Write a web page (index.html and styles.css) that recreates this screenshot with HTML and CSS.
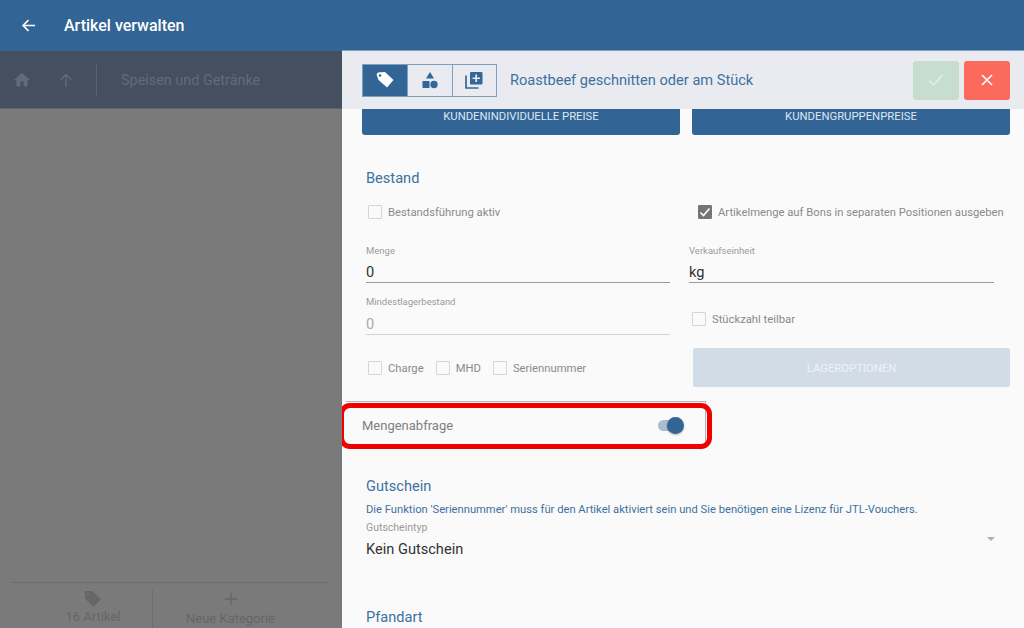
FILE: index.html
```html
<!DOCTYPE html>
<html>
<head>
    <title>Artikel verwalten</title>
    <link rel="stylesheet" href="styles.css">
</head>
<body>
    <header class="topbar">
        <svg class="back-icon" width="15" height="15" viewBox="0 0 16 16"><path d="M15 8H2.5M8 2.2 2.2 8 8 13.8" fill="none" stroke="#fff" stroke-width="1.7"/></svg>
        <span class="topbar-title">Artikel verwalten</span>
    </header>

    <div class="main">
        <aside class="left-pane">
            <div class="crumbs">
                <svg class="crumb-home" width="16" height="15" viewBox="0 0 16 15"><path d="M6.4 14.5V9.6h3.2v4.9h4V8h2.4L8 .8 0 8h2.4v6.5z" fill="#636b76"/></svg>
                <svg class="crumb-up" width="14" height="14" viewBox="0 0 14 14"><path d="M7 14V1.5M1.5 7 7 1.5 12.5 7" fill="none" stroke="#636b76" stroke-width="1.4"/></svg>
                <span class="crumb-sep"></span>
                <span class="crumb-text">Speisen und Getränke</span>
            </div>
            <div class="left-empty"></div>
            <div class="left-footer">
                <div class="footer-btn footer-articles">
                    <svg width="18" height="18" viewBox="0 0 18 18"><path d="M1 2a1 1 0 0 1 1-1h6.500l8.500 8.500-7.500 7.500L1 8.500z" fill="#666"/><circle cx="4" cy="4" r="1" fill="#7a7a7a"/></svg>
                    <span>16 Artikel</span>
                </div>
                <div class="footer-btn footer-new">
                    <svg width="14" height="14" viewBox="0 0 14 14"><path d="M7 1v12M1 7h12" fill="none" stroke="#666" stroke-width="1.3"/></svg>
                    <span>Neue Kategorie</span>
                </div>
            </div>
        </aside>

        <section class="panel">
            <div class="toolbar">
                <div class="tabs">
                    <div class="tab tab-active">
                        <svg width="20" height="18" viewBox="0 0 20 18"><path d="M1.500 3.500 3 1.500l7-.5 8.500 8-6.500 7.500L3.500 9z" fill="#fff"/><circle cx="5" cy="4.500" r="1.300" fill="#336699"/></svg>
                    </div>
                    <div class="tab">
                        <svg width="18" height="18" viewBox="0 0 18 18"><path d="M9 1l4 6.500H5z" fill="#336699"/><rect x="1.500" y="10" width="7" height="7" fill="#336699"/><circle cx="13" cy="13.500" r="3.700" fill="#336699"/></svg>
                    </div>
                    <div class="tab">
                        <svg width="18" height="18" viewBox="0 0 18 18"><path d="M1 4.500V17h12.500" fill="none" stroke="#336699" stroke-width="1.700"/><path d="M6 1h10.500a1 1 0 0 1 1 1v10.500a1 1 0 0 1-1 1H6a1 1 0 0 1-1-1V2a1 1 0 0 1 1-1z" fill="#336699"/><path d="M11.200 3.500v7.500M7.500 7.250H15" stroke="#e9ebf1" stroke-width="1.700"/></svg>
                    </div>
                </div>
                <span class="toolbar-title">Roastbeef geschnitten oder am Stück</span>
                <button class="action action-ok">
                    <svg width="16" height="14" viewBox="0 0 16 14"><path d="M1.500 7.500 5.500 12 14.500 2" fill="none" stroke="#e6f0ea" stroke-width="1.300"/></svg>
                </button>
                <button class="action action-cancel">
                    <svg width="14" height="14" viewBox="0 0 14 14"><path d="M2 2l10 10M12 2 2 12" fill="none" stroke="#fff" stroke-width="1.700"/></svg>
                </button>
            </div>

            <div class="content">
                <div class="price-row">
                    <div class="price-btn">KUNDENINDIVIDUELLE PREISE</div>
                    <div class="price-btn">KUNDENGRUPPENPREISE</div>
                </div>

                <h2 class="section-title title-stock">Bestand</h2>

                <div class="check-row row-stock">
                    <label class="check check-stock"><span class="box"></span>Bestandsführung aktiv</label>
                    <label class="check check-separate">
                        <span class="box box-on">
                            <svg width="12" height="12" viewBox="0 0 12 12"><path d="M1.500 6.500 4.500 9.500 10.500 2.500" fill="none" stroke="#fff" stroke-width="1.600"/></svg>
                        </span>Artikelmenge auf Bons in separaten Positionen ausgeben
                    </label>
                </div>

                <div class="field-row row-qty">
                    <div class="field">
                        <span class="field-label">Menge</span>
                        <span class="field-value">0</span>
                    </div>
                    <div class="field field-right">
                        <span class="field-label">Verkaufseinheit</span>
                        <span class="field-value">kg</span>
                    </div>
                </div>

                <div class="field-row row-min">
                    <div class="field field-disabled">
                        <span class="field-label">Mindestlagerbestand</span>
                        <span class="field-value">0</span>
                    </div>
                    <label class="check check-divisible"><span class="box"></span>Stückzahl teilbar</label>
                </div>

                <div class="options-row">
                    <div class="options-checks">
                        <label class="check"><span class="box"></span>Charge</label>
                        <label class="check"><span class="box"></span>MHD</label>
                        <label class="check"><span class="box"></span>Seriennummer</label>
                    </div>
                    <div class="stock-btn">LAGEROPTIONEN</div>
                </div>

                <div class="toggle-card">
                    <span class="toggle-label">Mengenabfrage</span>
                    <span class="switch"><span class="switch-knob"></span></span>
                    <span class="highlight"></span>
                </div>

                <h2 class="section-title title-voucher">Gutschein</h2>
                <p class="voucher-note">Die Funktion 'Seriennummer' muss für den Artikel aktiviert sein und Sie benötigen eine Lizenz für JTL-Vouchers.</p>
                <div class="select-field">
                    <span class="field-label">Gutscheintyp</span>
                    <span class="field-value">Kein Gutschein</span>
                    <span class="select-arrow"></span>
                </div>

                <h2 class="section-title title-deposit">Pfandart</h2>
            </div>
        </section>
    </div>
</body>
</html>
```

FILE: styles.css
```css
* {
    box-sizing: border-box;
}

html,
body {
    height: 100%;
    margin: 0;
    overflow: hidden;
}

body {
    display: flex;
    flex-direction: column;
    font-family: Roboto, "Liberation Sans", sans-serif;
    background: #7a7a7a;
}

.topbar {
    display: flex;
    align-items: center;
    flex: 0 0 51px;
    padding-left: 21px;
    background: #326496;
}

.topbar-title {
    margin-left: 28px;
    color: #fff;
    font-size: 16px;
    font-weight: 500;
}

.main {
    display: flex;
    flex: 1;
    min-height: 0;
}

/* left side, dimmed behind the panel */
.left-pane {
    display: flex;
    flex-direction: column;
    flex: 0 0 342px;
}

.crumbs {
    display: flex;
    align-items: center;
    flex: 0 0 58px;
    padding-left: 14px;
    background: #444f60;
    border-bottom: 1px solid #5f6670;
}

.crumb-up {
    margin-left: 29px;
}

.crumb-sep {
    width: 1px;
    height: 32px;
    margin-left: 23px;
    background: #5a6370;
}

.crumb-text {
    margin: 1px 0 0 24px;
    color: #636b76;
    font-size: 14.400px;
}

.left-empty {
    flex: 1;
}

.left-footer {
    display: flex;
    flex: 0 0 46px;
    margin: 0 14px 0 12px;
    padding-top: 7px;
    border-top: 1px solid #6d6d6d;
}

.footer-btn {
    display: flex;
    flex-direction: column;
    align-items: center;
    gap: 1px;
    color: #666;
    font-size: 13px;
}

.footer-articles {
    flex: 0 0 141px;
    padding-left: 22px;
    border-right: 1px solid #6d6d6d;
}

.footer-new {
    flex: 1;
    gap: 5px;
    padding: 2px 20px 0 0;
}

/* right panel */
.panel {
    display: flex;
    flex-direction: column;
    flex: 1;
    min-width: 0;
    background: #fafafa;
    border-top: 1px solid #7f9fc0;
    margin-top: -1px;
}

.toolbar {
    display: flex;
    align-items: center;
    flex: 0 0 58px;
    padding: 0 14px 0 20px;
    background: #e9ebf1;
}

.tabs {
    display: flex;
    border: 1px solid #7f9fc0;
}

.tab {
    display: flex;
    align-items: center;
    justify-content: center;
    width: 44.300px;
    height: 31px;
    border-left: 1px solid #7f9fc0;
}

.tab:first-child {
    border-left: 0;
}

.tab-active {
    background: #326496;
}

.toolbar-title {
    flex: 1;
    margin-left: 13px;
    color: #3f719f;
    font-size: 14.600px;
}

.action {
    display: flex;
    align-items: center;
    justify-content: center;
    width: 46px;
    height: 39px;
    margin-left: 5px;
    padding: 0;
    border: 0;
    border-radius: 3px;
}

.action-ok {
    background: #c6ddcf;
}

.action-cancel {
    margin-left: 5px;
    background: #fc695d;
}

.content {
    flex: 1;
    min-height: 0;
    overflow: hidden;
    padding: 0 14px 0 20px;
}

.price-row {
    display: flex;
    gap: 12px;
}

.price-btn {
    flex: 1;
    height: 26px;
    padding-top: 1px;
    border-radius: 0 0 3px 3px;
    background: #326496;
    color: #dfe7ef;
    font-size: 11.300px;
    line-height: 14px;
    text-align: center;
}

.section-title {
    margin: 0 0 0 4px;
    color: #3f719f;
    font-size: 14.600px;
    font-weight: 400;
    line-height: 18px;
}

.title-stock {
    margin-top: 34px;
}

.check {
    display: flex;
    align-items: center;
    color: #8a8a8a;
    font-size: 11.250px;
}

.box {
    display: flex;
    align-items: center;
    justify-content: center;
    width: 14px;
    height: 14px;
    margin-right: 6px;
    border: 1px solid #d5d5d5;
    border-radius: 1px;
}

.box-on {
    background: #757575;
    border-color: #757575;
}

.row-stock {
    display: flex;
    margin-top: 18px;
    padding-left: 6px;
}

.check-stock {
    flex: 0 0 330px;
}

.field-row {
    display: flex;
    margin-left: 4px;
}

.row-qty {
    margin-top: 26px;
}

.row-min {
    margin-top: 13px;
}

.field {
    display: flex;
    flex-direction: column;
    width: 304px;
    height: 38px;
    border-bottom: 1px solid #9a9a9a;
}

.field-right {
    width: 305px;
    margin-left: 19px;
}

.field-label {
    color: #9a9a9a;
    font-size: 9.500px;
    line-height: 12px;
}

.field-value {
    margin-top: 7px;
    color: #333;
    font-size: 14.600px;
    line-height: 17px;
}

.field-disabled {
    height: 39px;
    border-bottom-color: #d5d5d5;
}

.field-disabled .field-value {
    margin-top: 8px;
    color: #aaa;
}

.check-divisible {
    margin-left: 22px;
    padding-top: 7px;
}

.options-row {
    display: flex;
    align-items: center;
    margin-top: 13px;
}

.options-checks {
    display: flex;
    flex: 0 0 331px;
    gap: 12px;
    padding: 1px 0 0 6px;
}

.stock-btn {
    flex: 1;
    height: 39px;
    border-radius: 2px;
    background: #d2dce6;
    color: #eef2f6;
    font-size: 11.300px;
    line-height: 41px;
    text-align: center;
}

.toggle-card {
    position: relative;
    display: flex;
    align-items: center;
    justify-content: space-between;
    width: 360px;
    height: 44px;
    margin: 14px 0 0 -16px;
    padding: 4px 23px 0 16px;
    background: #fafafa;
    border-top: 1px solid #b5b5b5;
    border-right: 1px solid #b5b5b5;
    border-bottom: 1px solid #b5b5b5;
}

.toggle-label {
    color: #808080;
    font-size: 13px;
}

.switch {
    position: relative;
    width: 24px;
    height: 11px;
    border-radius: 6px;
    background: #a9bdd2;
}

.switch-knob {
    position: absolute;
    top: -3px;
    right: -2px;
    width: 17px;
    height: 17px;
    border-radius: 50%;
    background: #326496;
    box-shadow: 0 1px 2px rgba(0, 0, 0, 0.3);
}

.highlight {
    position: absolute;
    top: 1px;
    right: -7px;
    bottom: -5px;
    left: -7px;
    border: 5px solid #f00000;
    border-radius: 11px;
}

.title-voucher {
    margin-top: 32px;
}

.voucher-note {
    margin: 8px 0 0 4px;
    color: #3f719f;
    font-size: 11.200px;
    line-height: 14px;
}

.select-field {
    position: relative;
    display: flex;
    flex-direction: column;
    margin: 5px 0 0 4px;
}

.select-field .field-label {
    font-size: 10.500px;
}

.select-arrow {
    position: absolute;
    top: 15px;
    right: 15px;
    border-top: 4px solid #b0b0b0;
    border-right: 4px solid transparent;
    border-left: 4px solid transparent;
}

.title-deposit {
    margin-top: 50px;
}
```
